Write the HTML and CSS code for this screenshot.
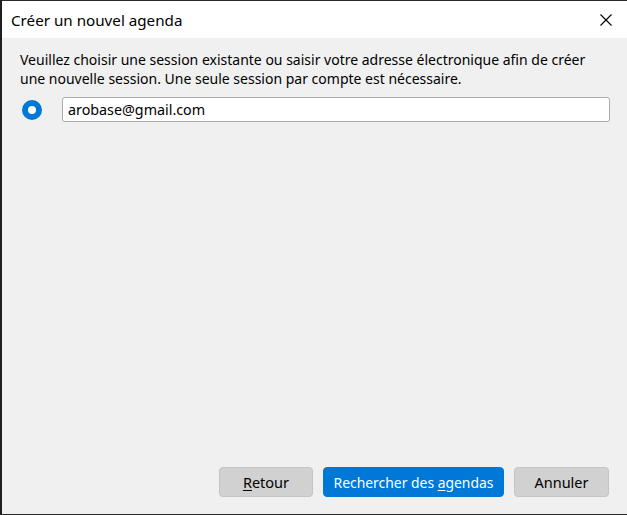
FILE: index.html
```html
<!DOCTYPE html>
<html lang="fr">
<head>
<meta charset="utf-8">
<title>Créer un nouvel agenda</title>
<link rel="stylesheet" href="styles.css">
</head>
<body>
<div class="window">
  <div class="titlebar">
    <span class="title">Créer un nouvel agenda</span>
    <svg class="close" width="12" height="12" viewBox="0 0 12 12"><path d="M0.5 0.5 L11.5 11.5 M11.5 0.5 L0.5 11.5" stroke="#000" stroke-width="1.1" fill="none"/></svg>
  </div>
  <div class="body">
    <p class="desc">Veuillez choisir une session existante ou saisir votre adresse électronique afin de créer une nouvelle session. Une seule session par compte est nécessaire.</p>
    <div class="row">
      <span class="radio"></span>
      <div class="input">arobase@gmail.com</div>
    </div>
    <div class="spacer"></div>
    <div class="buttons">
      <button class="btn btn-back"><u>R</u>etour</button>
      <button class="btn btn-primary">Rechercher des <u>a</u>gendas</button>
      <button class="btn btn-cancel">Annuler</button>
    </div>
  </div>
</div>
</body>
</html>
```

FILE: styles.css
```css
html, body {
  margin: 0;
  padding: 0;
  width: 627px;
  height: 515px;
  overflow: hidden;
  background: #1f1f1f;
}
.window {
  box-sizing: border-box;
  width: 627px;
  height: 515px;
  border-top: 1px solid #2a2a2a;
  border-bottom: 1px solid #2a2a2a;
  border-left: 2px solid #1f1f1f;
  display: flex;
  flex-direction: column;
  font-family: "Noto Sans", "Open Sans", sans-serif;
  color: #000;
}
.titlebar {
  height: 37px;
  background: #fff;
  display: flex;
  align-items: center;
  justify-content: space-between;
  padding: 0 15px 0 9px;
  flex-shrink: 0;
}
.title {
  font-size: 15.2px;
}
.close {
  display: block;
}
.body {
  flex: 1;
  background: #f0f0f0;
  display: flex;
  flex-direction: column;
  padding: 12px 18px 17px 18px;
}
.desc {
  margin: 0;
  font-size: 14px;
  line-height: 19px;
  color: #000;
}
.row {
  display: flex;
  align-items: center;
  margin-top: 9px;
}
.radio {
  box-sizing: border-box;
  width: 20px;
  height: 20px;
  border-radius: 50%;
  border: 6px solid #0078d7;
  background: #fff;
  margin-left: 2px;
  flex-shrink: 0;
}
.input {
  box-sizing: border-box;
  margin-left: 20px;
  flex: 1;
  height: 25px;
  background: #fff;
  border: 1px solid #acacac;
  border-radius: 3px;
  font-size: 14.3px;
  line-height: 23px;
  padding-left: 5px;
  margin-right: -1px;
}
.spacer {
  flex: 1;
}
.buttons {
  display: flex;
  justify-content: flex-end;
  gap: 10px;
}
.btn {
  box-sizing: border-box;
  height: 30px;
  border-radius: 4px;
  font-family: "Noto Sans", "Open Sans", sans-serif;
  font-size: 14.5px;
  padding: 0;
  margin: 0;
  border: 1px solid #c4c4c4;
  background: #d1d1d1;
  color: #000;
}
.btn u {
  text-decoration-thickness: 1px;
  text-underline-offset: 2px;
}
.btn-back {
  width: 94px;
}
.btn-primary {
  width: 181px;
  font-size: 13.9px;
  background: #0078d7;
  border-color: #0078d7;
  color: #fff;
}
.btn-cancel {
  width: 95px;
}
```
